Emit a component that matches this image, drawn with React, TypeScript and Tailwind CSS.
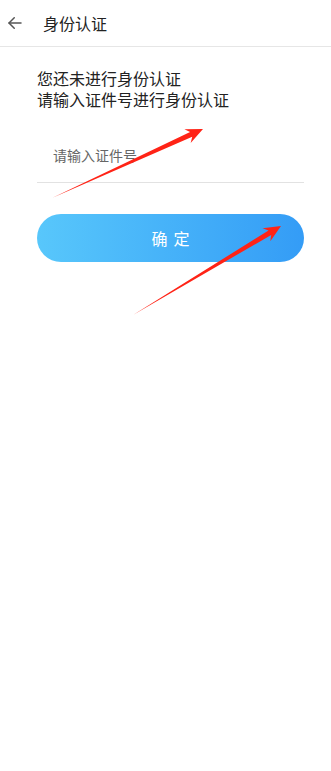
import React, { useState } from 'react';

const Arrow = ({ x1, y1, x2, y2 }: { x1: number; y1: number; x2: number; y2: number }) => {
  const L = Math.hypot(x2 - x1, y2 - y1);
  const angle = (Math.atan2(y2 - y1, x2 - x1) * 180) / Math.PI;
  const pts = `0,0 ${L - 13},-2.6 ${L - 17},-7.5 ${L},0 ${L - 17},7.5 ${L - 13},2.6`;
  return (
    <g transform={`translate(${x1} ${y1}) rotate(${angle})`}>
      <polygon points={pts} fill="#ff2316" />
    </g>
  );
};

const App = () => {
  const [idNo, setIdNo] = useState('');

  return (
    <div
      className="relative w-[331px] h-[771px] bg-white overflow-hidden"
      style={{ fontFamily: '"Noto Sans CJK SC", "Noto Sans", sans-serif' }}
    >
      <div className="h-[47px] flex items-center border-b border-[#e6e6e6]">
        <button className="w-[43px] h-full flex items-center pl-[6px] text-[#555]">
          <svg width="18" height="18" viewBox="0 0 24 24" fill="none" stroke="currentColor" strokeWidth="2" strokeLinecap="round" strokeLinejoin="round">
            <path d="M20 12H4" />
            <path d="M11 5l-7 7 7 7" />
          </svg>
        </button>
        <span className="text-[16px] text-[#222]">身份认证</span>
      </div>

      <div className="pl-[37px] pr-[27px] pt-[21px]">
        <div className="text-[16px] leading-[21px] text-[#222]">
          <p>您还未进行身份认证</p>
          <p>请输入证件号进行身份认证</p>
        </div>

        <div className="mt-[18px] border-b border-[#e2e2e2] h-[55px] flex items-center">
          <input
            value={idNo}
            onChange={(e) => setIdNo(e.target.value)}
            placeholder="请输入证件号"
            className="w-full pl-[16px] text-[14px] text-[#333] placeholder:text-[#666] outline-none bg-transparent"
          />
        </div>

        <button className="mt-[31px] w-full h-[48px] pl-[6px] rounded-full bg-gradient-to-r from-[#58c7fb] to-[#349cf6] text-white text-[16px] tracking-[6px]">
          确定
        </button>
      </div>

      <svg className="absolute inset-0 pointer-events-none" width="331" height="771">
        <Arrow x1={52} y1={198} x2={203} y2={129} />
        <Arrow x1={133} y1={315} x2={281} y2={226} />
      </svg>
    </div>
  );
};

export default App;
